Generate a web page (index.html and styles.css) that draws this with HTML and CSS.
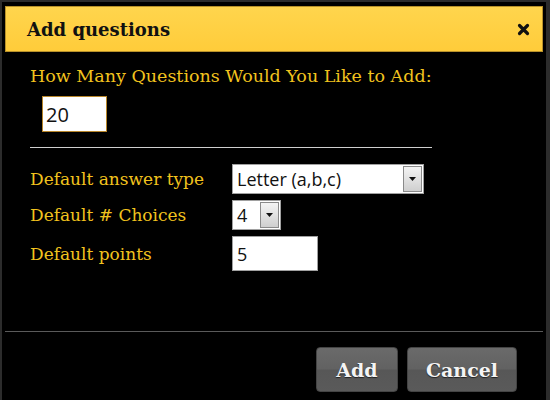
FILE: index.html
```html
<!DOCTYPE html>
<html>
<head>
<meta charset="utf-8">
<link rel="stylesheet" href="styles.css">
</head>
<body>
<div class="dialog">
  <div class="titlebar">
    <span class="title">Add questions</span>
    <svg class="close" width="13" height="13" viewBox="0 0 13 13"><path d="M2.5 2.5 L10.5 10.5 M10.5 2.5 L2.5 10.5" stroke="#111" stroke-width="3.2" stroke-linecap="round"/></svg>
  </div>
  <div class="content">
    <div class="question">How Many Questions Would You Like to Add:</div>
    <div class="count-row"><input class="count" type="text" value="20"></div>
    <div class="divider"></div>
    <div class="grid">
      <div class="label">Default answer type</div>
      <div class="select wide"><span class="value">Letter (a,b,c)</span><span class="arrow"><svg width="7" height="4" viewBox="0 0 7 4"><path d="M0 0 H7 L3.5 4 Z" fill="#111"/></svg></span></div>
      <div class="label">Default # Choices</div>
      <div class="select narrow"><span class="value">4</span><span class="arrow"><svg width="7" height="4" viewBox="0 0 7 4"><path d="M0 0 H7 L3.5 4 Z" fill="#111"/></svg></span></div>
      <div class="label">Default points</div>
      <div><input class="points" type="text" value="5"></div>
    </div>
  </div>
  <div class="footer">
    <button class="btn add">Add</button>
    <button class="btn cancel">Cancel</button>
  </div>
</div>
</body>
</html>
```
FILE: styles.css
```css
html, body {
  margin: 0;
  padding: 0;
}
body {
  width: 550px;
  height: 400px;
  overflow: hidden;
  background: #2c2c2c;
  font-family: "DejaVu Serif", Georgia, serif;
}
.dialog {
  margin: 2px 4px 0 2px;
  height: 398px;
  background: #000;
  padding: 4px 3px 0 3px;
  box-sizing: border-box;
  display: flex;
  flex-direction: column;
}
.titlebar {
  height: 46px;
  box-sizing: border-box;
  border: 1px solid #b8912a;
  background: linear-gradient(#ffd54d, #ffcc3a);
  display: flex;
  align-items: center;
  justify-content: space-between;
  padding: 0 12px 0 21px;
}
.title {
  font-weight: bold;
  font-size: 18px;
  color: #111;
}
.close {
  display: block;
}
.content {
  padding: 13px 0 0 25px;
  color: #f2c31e;
  flex: 1;
}
.question {
  font-size: 17.5px;
  line-height: 22px;
}
.count-row {
  margin-top: 9px;
  padding-left: 12px;
}
input {
  font-family: "Open Sans", "Noto Sans", sans-serif;
  font-size: 18px;
  color: #111;
  background: #fff;
  margin: 0;
  outline: none;
  box-sizing: border-box;
}
.count {
  width: 65px;
  height: 36px;
  border: 1px solid #b8862a;
  padding: 0 0 0 3px;
  font-size: 20px;
}
.divider {
  width: 402px;
  height: 1px;
  background: #cfcfcf;
  margin-top: 15px;
}
.grid {
  display: grid;
  grid-template-columns: 202px auto;
  row-gap: 6px;
  margin-top: 16px;
  align-items: center;
  justify-items: start;
}
.label {
  font-size: 17px;
}
.select {
  display: flex;
  background: #fff;
  border: 1px solid #a0a0a0;
  box-sizing: border-box;
  height: 30px;
  font-family: "Open Sans", "Noto Sans", sans-serif;
  font-size: 18px;
  color: #111;
}
.select .value {
  flex: 1;
  padding-left: 4px;
  line-height: 28px;
}
.select .arrow {
  width: 17px;
  margin: 1px 1px 1px 0;
  border: 1px solid #8a8a8a;
  background: linear-gradient(#f4f4f4, #cfcfcf);
  display: flex;
  align-items: center;
  justify-content: center;
}
.wide {
  width: 192px;
}
.narrow {
  width: 49px;
}
.points {
  width: 86px;
  height: 35px;
  border: 1px solid #a0a0a0;
  padding: 0 0 0 4px;
}
.footer {
  border-top: 1px solid #5a5a5a;
  height: 69px;
  box-sizing: border-box;
  flex: none;
  display: flex;
  justify-content: flex-end;
  align-items: flex-start;
  gap: 9px;
  padding: 15px 26px 0 0;
}
.btn {
  height: 45px;
  border: 1px solid #444;
  border-radius: 4px;
  background: linear-gradient(#6a6a6a 0%, #626262 48%, #575757 52%, #5a5a5a 100%);
  color: #f4f4f4;
  font-family: "DejaVu Serif", Georgia, serif;
  font-weight: bold;
  font-size: 19px;
  text-shadow: 0 1px 1px #222;
  padding: 0;
}
.add {
  width: 82px;
}
.cancel {
  width: 110px;
}
```
